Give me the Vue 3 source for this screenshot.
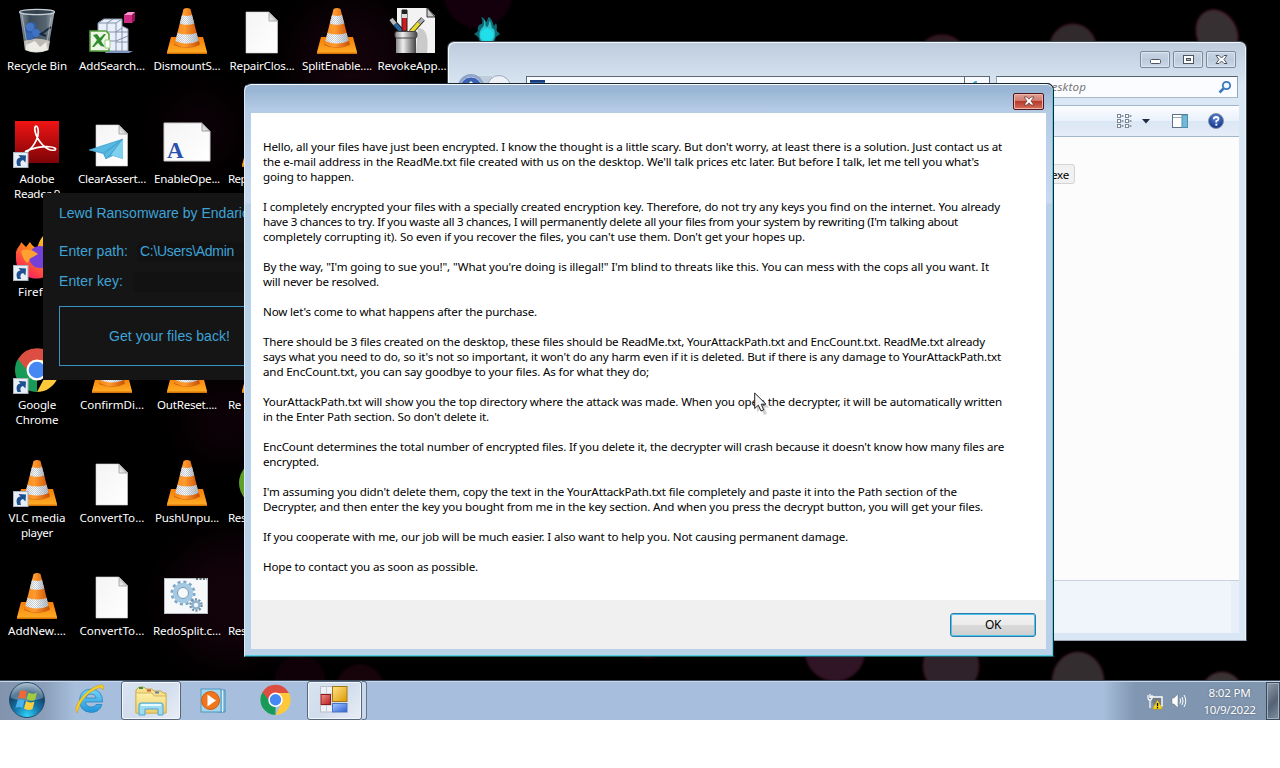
<script setup>
// Sets the letter spacing so that a single-line run takes the given width.
const vFit = {
  mounted(el, { value }) {
    if (!value) return
    const natural = el.getBoundingClientRect().width
    el.style.letterSpacing = (value - natural) / el.textContent.length + 'px'
  },
}

const icons = [
  { icon: 'bin', lines: [['Recycle Bin', 60]] },
  { icon: 'adobe', link: true, lines: [['Adobe', 35], ['Reader 9', 46]] },
  { icon: 'firefox', link: true, lines: [['Firefox', 38]] },
  { icon: 'chrome', link: true, lines: [['Google', 38], ['Chrome', 43]] },
  { icon: 'cone', link: true, lines: [['VLC media', 57], ['player', 32]] },
  { icon: 'cone', lines: [['AddNew....', 58]] },
  { icon: 'cubes', lines: [['AddSearch...', 66]] },
  { icon: 'plane', lines: [['ClearAssert...', 68]] },
  { icon: '', lines: [] },
  { icon: 'cone', lines: [['ConfirmDi...', 64]] },
  { icon: 'doc', lines: [['ConvertTo...', 65]] },
  { icon: 'doc', lines: [['ConvertTo...', 65]] },
  { icon: 'cone', lines: [['DismountS...', 67]] },
  { icon: 'font', lines: [['EnableOpe...', 66]] },
  { icon: '', lines: [] },
  { icon: 'cone', lines: [['OutReset....', 60]] },
  { icon: 'cone', lines: [['PushUnpu...', 64]] },
  { icon: 'gears', lines: [['RedoSplit.c...', 68]] },
  { icon: 'doc', lines: [['RepairClos...', 65]] },
  { icon: 'cone', side: true, lines: [['Rep', 19]] },
  { icon: '', lines: [] },
  { icon: 'cone', side: true, lines: [['Re', 13]] },
  { icon: 'disc', side: true, lines: [['Res', 18]] },
  { icon: 'doc', side: true, lines: [['Res', 18]] },
]
const topRow = [
  { icon: 'cone', lines: [['SplitEnable....', 70]] },
  { icon: 'cup', lines: [['RevokeApp...', 69]] },
  { icon: 'fire', lines: [] },
]

const paragraphs = [
  [
    ["Hello, all your files have just been encrypted. I know the thought is a little scary. But don't worry, at least there is a solution. Just contact us at", 739],
    ["the e-mail address in the ReadMe.txt file created with us on the desktop. We'll talk prices etc later. But before I talk, let me tell you what's", 716],
    ['going to happen.', 91],
  ],
  [
    ['I completely encrypted your files with a specially created encryption key. Therefore, do not try any keys you find on the internet. You already', 737],
    ["have 3 chances to try. If you waste all 3 chances, I will permanently delete all your files from your system by rewriting (I'm talking about", 695],
    ["completely corrupting it). So even if you recover the files, you can't use them. Don't get your hopes up.", 542],
  ],
  [
    ['By the way, "I\'m going to sue you!", "What you\'re doing is illegal!" I\'m blind to threats like this. You can mess with the cops all you want. It', 726],
    ['will never be resolved.', 116],
  ],
  [["Now let's come to what happens after the purchase.", 274]],
  [
    ['There should be 3 files created on the desktop, these files should be ReadMe.txt, YourAttackPath.txt and EncCount.txt. ReadMe.txt already', 722],
    ["says what you need to do, so it's not so important, it won't do any harm even if it is deleted. But if there is any damage to YourAttackPath.txt", 738],
    ['and EncCount.txt, you can say goodbye to your files. As for what they do;', 386],
  ],
  [
    ['YourAttackPath.txt will show you the top directory where the attack was made. When you open the decrypter, it will be automatically written', 739],
    ["in the Enter Path section. So don't delete it.", 226],
  ],
  [
    ["EncCount determines the total number of encrypted files. If you delete it, the decrypter will crash because it doesn't know how many files are", 741],
    ['encrypted.', 56],
  ],
  [
    ["I'm assuming you didn't delete them, copy the text in the YourAttackPath.txt file completely and paste it into the Path section of the", 694],
    ['Decrypter, and then enter the key you bought from me in the key section. And when you press the decrypt button, you will get your files.', 720],
  ],
  [['If you cooperate with me, our job will be much easier. I also want to help you. Not causing permanent damage.', 585]],
  [['Hope to contact you as soon as possible.', 215]],
]
</script>

<template>
  <div class="screen">
    <svg class="sprite" width="0" height="0">
      <defs>
        <linearGradient id="gCone" x1="0" x2="1" y1="0" y2="0">
          <stop offset="0" stop-color="#f58a1c" /><stop offset=".4" stop-color="#ff9a2e" /><stop offset="1" stop-color="#c94e04" />
        </linearGradient>
        <linearGradient id="gBase" x1="0" x2="0" y1="0" y2="1">
          <stop offset="0" stop-color="#f57c08" /><stop offset="1" stop-color="#ffb027" />
        </linearGradient>
        <linearGradient id="gBand" x1="0" x2="1" y1="0" y2="0">
          <stop offset="0" stop-color="#dfe4e8" /><stop offset=".4" stop-color="#fff" /><stop offset="1" stop-color="#b4bdc6" />
        </linearGradient>
        <linearGradient id="gDoc" x1="0" x2="1" y1="0" y2="1">
          <stop offset="0" stop-color="#f4f4f4" /><stop offset="1" stop-color="#fff" />
        </linearGradient>
        <linearGradient id="gFold" x1="0" x2="1" y1="1" y2="0">
          <stop offset="0" stop-color="#f8f8f8" /><stop offset="1" stop-color="#999" />
        </linearGradient>
        <linearGradient id="gRed" x1="0" x2="0" y1="0" y2="1">
          <stop offset="0" stop-color="#f01414" /><stop offset="1" stop-color="#7d0307" />
        </linearGradient>
        <linearGradient id="gGlass" x1="0" x2="1" y1="0" y2="0">
          <stop offset="0" stop-color="#8b98a2" /><stop offset=".3" stop-color="#3b4a57" /><stop offset=".75" stop-color="#56646f" /><stop offset="1" stop-color="#a6b0b8" />
        </linearGradient>
        <linearGradient id="gPlane" x1="0" x2="1" y1="0" y2="1">
          <stop offset="0" stop-color="#a6e2f7" /><stop offset="1" stop-color="#3399cf" />
        </linearGradient>
        <linearGradient id="gCup" x1="0" x2="1" y1="0" y2="0">
          <stop offset="0" stop-color="#888" /><stop offset=".35" stop-color="#eee" /><stop offset="1" stop-color="#444" />
        </linearGradient>
        <linearGradient id="gFox" x1=".8" x2=".1" y1="0" y2="1">
          <stop offset="0" stop-color="#ffe22e" /><stop offset=".4" stop-color="#ff8a1c" /><stop offset=".8" stop-color="#fb3250" /><stop offset="1" stop-color="#e51f87" />
        </linearGradient>
        <radialGradient id="gOrb" cx=".5" cy=".95" r=".9">
          <stop offset="0" stop-color="#31d4f6" /><stop offset=".4" stop-color="#1579ae" /><stop offset=".75" stop-color="#15436b" /><stop offset="1" stop-color="#8ea5b8" />
        </radialGradient>
        <linearGradient id="gIE" x1="0" x2="0" y1="0" y2="1">
          <stop offset="0" stop-color="#74d5fb" /><stop offset="1" stop-color="#2094d8" />
        </linearGradient>
        <linearGradient id="gFolder" x1="0" x2="0" y1="0" y2="1">
          <stop offset="0" stop-color="#fdf0a9" /><stop offset="1" stop-color="#edce6b" />
        </linearGradient>
        <linearGradient id="gGold" x1="0" x2="1" y1="0" y2="1">
          <stop offset="0" stop-color="#ffe28a" /><stop offset="1" stop-color="#dc9a00" />
        </linearGradient>
        <linearGradient id="gBlue" x1="0" x2="1" y1="0" y2="1">
          <stop offset="0" stop-color="#a9c5ff" /><stop offset="1" stop-color="#2c63d6" />
        </linearGradient>
        <linearGradient id="gCrim" x1="0" x2="1" y1="0" y2="1">
          <stop offset="0" stop-color="#f28b85" /><stop offset="1" stop-color="#b5211f" />
        </linearGradient>
        <radialGradient id="gHelp" cx=".5" cy=".3" r=".7">
          <stop offset="0" stop-color="#5b86d8" /><stop offset="1" stop-color="#112f84" />
        </radialGradient>
        <pattern id="pDots" width="2" height="2" patternUnits="userSpaceOnUse">
          <rect width="1" height="1" fill="#8a96a4" opacity=".45" /><rect x="1" y="1" width="1" height="1" fill="#8a96a4" opacity=".45" />
        </pattern>
      </defs>

      <symbol id="i-cone" viewBox="0 0 48 48">
        <path d="M8 29H40L44 44V46H4V44Z" fill="url(#gBase)" />
        <path d="M4 44.5H44V46H4Z" fill="#d87405" />
        <path d="M11 37Q24 43 37 37L36 33H12Z" fill="#c85b08" opacity=".8" />
        <path d="M20.5 1Q24 -1 27.500 1L36.500 36Q24 43 11.500 36Z" fill="url(#gCone)" />
        <path d="M19 7Q24 9 29 7L31.300 15.500Q24 18 16.800 15.500Z" fill="url(#gBand)" />
        <path d="M14.500 25Q24 28 33.700 25L35.500 33Q24 38 12.400 33Z" fill="url(#gBand)" />
        <path d="M19 7Q24 9 29 7L31.300 15.500Q24 18 16.800 15.500ZM14.500 25Q24 28 33.700 25L35.500 33Q24 38 12.400 33Z" fill="url(#pDots)" />
      </symbol>
      <symbol id="i-doc" viewBox="0 0 48 48">
        <path d="M8 4H31L39.500 12.500V45H8Z" fill="url(#gDoc)" stroke="#d4d4d4" stroke-width=".6" />
        <path d="M31 4V13H39.500Z" fill="url(#gFold)" stroke="#999" stroke-width=".8" />
      </symbol>
      <symbol id="i-bin" viewBox="0 0 48 48">
        <path d="M6.500 4L12 42Q23 47 35 42L41.500 4Z" fill="url(#gGlass)" />
        <path d="M11 33Q23 28 37 33L35.500 42Q23 47 12 42Z" fill="#bdbab4" />
        <path d="M13 37L22 33L27 39L33 34L35 42Q23 46 13 42Z" fill="#eeece6" />
        <path d="M16 15C20 12 25 17 22 21C28 20 27 29 22 29C18 35 11 30 15 26C10 23 12 18 16 15Z" fill="#2f5fae" />
        <circle cx="17" cy="19" r="4" fill="#4478c6" /><circle cx="23" cy="25" r="4" fill="#3e72c2" /><circle cx="16" cy="28" r="3.500" fill="#3767b4" />
        <path d="M38 19L31 24L28 26L33 28" fill="none" stroke="#16263e" stroke-width="2" />
        <path d="M9 7L15 42M38 9L33 41" stroke="#d5dce1" opacity=".5" />
        <ellipse cx="24" cy="4" rx="17.500" ry="2.600" fill="#34424d" stroke="#c6d0d6" stroke-width="1.300" />
      </symbol>
      <symbol id="i-adobe" viewBox="0 0 48 48">
        <rect x="2" width="44" height="42" fill="url(#gRed)" />
        <path d="M13 30C18 30 27 17 25 8C24 3 21 5 22 10C24 20 34 31 42 29C46 26 31 23 13 30C11 32 14 32 17 28" fill="none" stroke="#fff" stroke-width="1.700" />
      </symbol>
      <symbol id="i-link" viewBox="0 0 48 48">
        <rect x=".5" y="31.500" width="14.500" height="15" fill="#e9eef5" stroke="#a9b3bf" />
        <path d="M4.500 45C2.500 40 4 37 7.500 36.500L5.500 34L13 34.500L12.500 41.500L10 39C6.500 40 7.500 43 8 45Z" fill="#1d4f91" />
      </symbol>
      <symbol id="i-firefox" viewBox="0 0 48 48">
        <path d="M3 18C5 12 8 11 8 8L13 13L17 8C19 12 22 13 24 15C26 7 29 3 31 1C35 9 45 12 45 25C44 50 4 52 3 25Z" fill="url(#gFox)" />
        <circle cx="27" cy="23" r="11" fill="#7440d8" />
        <path d="M8 17Q16 13 25 20L20 23Q16 24 15 29Q10 27 8 17Z" fill="#ffa030" />
      </symbol>
      <symbol id="i-chrome" viewBox="0 0 48 48">
        <path d="M24 23L24 45A22 22 0 0 1 4.950 12Z" fill="#189b57" />
        <path d="M24 13H43.600A22 22 0 0 1 24 45L33 28Z" fill="#fdc93b" />
        <path d="M5 12A22 22 0 0 1 43.500 13H24Q16 14 14 23Z" fill="#dc4e41" />
        <circle cx="24" cy="23" r="10.500" fill="#fff" /><circle cx="24" cy="23" r="8.300" fill="#4587f3" />
      </symbol>
      <symbol id="i-cubes" viewBox="0 0 48 48">
        <path d="M10 15L16 11H34V18L40 21V43H10Z" fill="#eaf0f9" stroke="#8794ac" />
        <path d="M10 15H28V43M19 15V43M10 24H28M10 33H28M16 11L10 15M25 11L19 15M34 11L28 15M28 24L34 20M28 33L40 28M34 18V43M28 24H40M28 34H40" fill="none" stroke="#8291aa" />
        <path d="M18 43H45L41 45H17Z" fill="#7c93bd" />
        <path d="M36 7L40 4H47V12L44 15H36Z" fill="#ce2d83" /><path d="M36 7L40 4H47L44 7Z" fill="#f39aca" /><path d="M44 7L47 4V12L44 15Z" fill="#8f1458" />
        <path d="M2 23H18L21 26V43H2Z" fill="#edf5e5" stroke="#57a13c" stroke-width="1.500" />
        <path d="M5 27L9 26L12 30L16 26H18L13 33L17 39L13 38L10 35L6 39H4L9 32Z" fill="#2e8b2e" />
        <path d="M17 32h5v8h-5z" fill="#fff" stroke="#9ccc82" />
      </symbol>
      <symbol id="i-plane" viewBox="0 0 48 48">
        <use href="#i-doc" width="48" height="48" />
        <path d="M1 29L35 18V38L25 35L18 38L15 33Z" fill="url(#gPlane)" />
        <path d="M1 29L35 18L15 32ZM35 18L22 34L18 38L16 33Z" fill="#58b9e2" stroke="#2e90bf" stroke-width=".5" />
        <path d="M35 18L23 34L35 38Z" fill="#7fd0ef" />
      </symbol>
      <symbol id="i-font" viewBox="0 0 48 48">
        <path d="M1 2H39L47 10V40H1Z" fill="url(#gDoc)" stroke="#ccc" />
        <path d="M39 2V10H47Z" fill="url(#gFold)" stroke="#777" stroke-width=".7" />
      </symbol>
      <symbol id="i-gears" viewBox="0 0 48 48">
        <rect x="1.500" y="5.500" width="43" height="35" fill="#f7f8fa" stroke="#b9bec6" />
        <path d="M33 6h11" stroke="#3c444f" stroke-width="1.500" stroke-dasharray="2 1.500" />
        <circle cx="20" cy="20" r="11" fill="none" stroke="#7ba6c6" stroke-width="3" stroke-dasharray="3 2.760" />
        <circle cx="20" cy="20" r="8" fill="none" stroke="#a4c9e2" stroke-width="4.500" />
        <circle cx="20" cy="20" r="5.500" fill="#f7f8fa" stroke="#7397b3" />
        <circle cx="33" cy="32" r="5.500" fill="none" stroke="#6f8fa8" stroke-width="2.500" stroke-dasharray="2 1.460" />
        <circle cx="33" cy="32" r="3.500" fill="#eef5fa" stroke="#8eb2ca" stroke-width="2.500" />
      </symbol>
      <symbol id="i-disc" viewBox="0 0 48 48">
        <circle cx="24" cy="23" r="23" fill="#5f9f2c" /><circle cx="24" cy="23" r="15" fill="#9bd05c" />
      </symbol>
      <symbol id="i-cup" viewBox="0 0 48 48">
        <path d="M9 -.5H39L47 8V45H9Z" fill="#f3f3f3" /><path d="M39 -.5V9H47Z" fill="#ccc" stroke="#333" />
        <path d="M30 20Q42 20 39 45H28Z" fill="#999" opacity=".45" />
        <path d="M14 24L4 13" stroke="#111" stroke-width="6" /><path d="M14 24L7 16" stroke="#2464a0" stroke-width="4" /><path d="M7 16L3 11" stroke="#b9b9b9" stroke-width="4" />
        <path d="M14 2h5v21h-5z" fill="#d4191c" stroke="#222" /><path d="M14 2h5v4h-5z" fill="#222" /><path d="M14 6h5v4h-5z" fill="#ddd" />
        <path d="M23 24L35 11" stroke="#222" stroke-width="5" /><path d="M23 24L31 15" stroke="#e6dc2f" stroke-width="3.500" /><path d="M31 15L35 11" stroke="#aaa" stroke-width="3.500" />
        <path d="M8 29H28V45H8Z" fill="url(#gCup)" /><rect x="7" y="23.500" width="22" height="6.500" rx="2" fill="url(#gCup)" stroke="#444" />
      </symbol>
      <symbol id="i-fire" viewBox="0 0 48 48">
        <path d="M18 9C22 10 22 12 23 14C25 13 24 10 26 9C30 12 30 16 31 18L33 15C35 19 33 21 34 23L37 26L33 29L31 34H17L15 29L11 26L15 23C14 19 16 16 19 16C20 13 19 11 18 9Z" fill="#0f6a74" />
        <path d="M21 12C24 15 21 18 24 19C27 17 25 14 27 13C29 17 28 21 31 21C32 24 33 29 29 34H19C15 29 16 22 20 19C22 16 21 14 21 12Z" fill="#2cc3ce" />
        <circle cx="24" cy="27" r="6.500" fill="#1fe0ea" />
      </symbol>
    </svg>

    <svg class="wallpaper" width="1280" height="681" viewBox="0 0 1280 681">
      <defs><filter id="soft" color-interpolation-filters="sRGB"><feGaussianBlur stdDeviation="1" /></filter>
        <filter id="haze" x="-20%" y="-20%" width="140%" height="140%" color-interpolation-filters="sRGB"><feGaussianBlur stdDeviation="18" /></filter></defs>
      <rect width="1280" height="681" fill="#000" />
      <g fill="#12020a" filter="url(#haze)"><circle cx="230" cy="600" r="60" /><circle cx="350" cy="60" r="55" /><circle cx="200" cy="130" r="40" opacity=".6" /><circle cx="225" cy="420" r="40" opacity=".7" /></g>
      <g filter="url(#soft)">
        <circle cx="478" cy="-6" r="34" fill="#14000c" /><circle cx="300" cy="680" r="25" fill="#100108" /><circle cx="360" cy="688" r="24" fill="#17030a" />
        <circle cx="648" cy="640" r="19" fill="#1d020b" />
        <circle cx="835" cy="651" r="30" fill="#2f1526" stroke="#36091b" />
        <circle cx="951" cy="666" r="28" fill="#30222a" stroke="#3d0d1b" />
        <ellipse cx="1078" cy="682" rx="26" ry="30" fill="#332d2f" stroke="#421320" />
        <ellipse cx="1222" cy="694" rx="21" ry="22" fill="#3a3334" stroke="#421320" />
        <circle cx="942" cy="61" r="26" fill="#2b1a21" stroke="#4d1023" />
        <circle cx="1073" cy="47" r="23" fill="#312a2c" stroke="#49121f" />
        <ellipse cx="1217" cy="34" rx="20" ry="25" transform="rotate(-25 1217 34)" fill="#373032" stroke="#521024" />
      </g>
    </svg>

    <div class="desktop">
      <div class="icon-grid">
        <div v-for="(it, i) in icons" :key="i" class="cell">
          <svg class="pic" viewBox="0 0 48 48"><use v-if="it.icon" :href="'#i-' + it.icon" width="48" height="48" /><use v-if="it.link" href="#i-link" width="48" height="48" /><text v-if="it.icon === 'font'" x="4" y="37" class="letter">A</text></svg>
          <div v-for="l in it.lines" :key="l[0]" class="label" :class="{ side: it.side }"><span v-fit="l[1]">{{ l[0] }}</span></div>
        </div>
      </div>
      <div v-for="it in topRow" :key="it.icon" class="cell">
        <svg class="pic" viewBox="0 0 48 48"><use :href="'#i-' + it.icon" width="48" height="48" /></svg>
        <div v-for="l in it.lines" :key="l[0]" class="label"><span v-fit="l[1]">{{ l[0] }}</span></div>
      </div>
    </div>

    <section class="explorer">
      <div class="caption">
        <i><svg width="30" height="17"><rect x="10.500" y="8.500" width="10" height="4" rx="1" fill="#fff" stroke="#4d545e" /></svg></i>
        <i><svg width="30" height="17"><rect x="10.500" y="4.500" width="10" height="8" fill="#fff" stroke="#4d545e" /><rect x="13.500" y="7.500" width="4" height="2" fill="#aebccc" stroke="#4d545e" /></svg></i>
        <i><svg width="30" height="17"><path d="M10 4.500H13L15.500 7L18 4.500H21L18 8.500L21 12.500H18L15.500 10L13 12.500H10L13 8.500Z" fill="#fff" stroke="#4d545e" /></svg></i>
      </div>
      <div class="navrow">
        <svg class="nav" width="70" height="28"><path d="M22 2H43V20H22Z" fill="#bfccdc" /><circle cx="22" cy="13" r="13" fill="#8fa4c6" /><circle cx="22" cy="14" r="11" fill="#3c62b5" stroke="#b5c6e4" /><path d="M17 12L22 7L27 12Z" fill="#fff" /><circle cx="50" cy="13" r="11.500" fill="#eef2f7" stroke="#9aa9bd" /></svg>
        <div class="address"><svg width="16" height="16"><rect width="15" height="12" fill="#2a64b4" /><path d="M0 1H15" stroke="#1a3d78" stroke-width="2" /></svg><span>Desktop</span><svg class="refresh" width="25" height="20"><path d="M.5 0V20" stroke="#666" /><path d="M8 8L11 5H13" fill="none" stroke="#269bcd" stroke-width="1.500" /></svg></div>
        <div class="search"><em v-fit="81">Search Desktop</em><svg width="14" height="14"><circle cx="8.500" cy="5.500" r="3.700" fill="#eff7ff" stroke="#3877bd" stroke-width="1.800" /><path d="M5.500 8.500L1.500 12.500" stroke="#3877bd" stroke-width="2.500" /></svg></div>
      </div>
      <div class="client">
        <div class="tools">
          <svg width="16" height="14"><g fill="#fff" stroke="#7b8696" stroke-width="1"><rect x="1.500" y=".5" width="3" height="3" /><rect x="1.500" y="5.500" width="3" height="3" /><rect x="1.500" y="10.500" width="3" height="3" /><rect x="9.500" y=".5" width="3" height="3" /><rect x="9.500" y="5.500" width="3" height="3" /><rect x="9.500" y="10.500" width="3" height="3" /></g><path d="M5.500 2H8M5.500 7H8M5.500 12H8M13.500 2H16M13.500 7H16M13.500 12H16" stroke="#8d98a8" stroke-width="2" stroke-dasharray="1.500 .6" /></svg>
          <svg class="drop" width="8" height="5"><path d="M0 0H8L4 4.500Z" fill="#1c2c45" /></svg>
          <svg class="pane" width="17" height="15"><rect x=".5" y=".5" width="15" height="13" fill="#fff" stroke="#5d7085" /><path d="M1 3.500H10" stroke="#9aabbc" /><rect x="10" y="1" width="5.500" height="12.500" fill="#72b9d8" stroke="#4f91b1" /></svg>
          <svg class="help" width="16" height="16"><circle cx="8" cy="8" r="7.500" fill="url(#gHelp)" stroke="#8794ac" /><path d="M5.700 6.200Q5.800 4 8.200 4Q10.600 4.100 10.500 6Q10.300 7.500 8.300 8.100V9.400" fill="none" stroke="#fff" stroke-width="1.800" /><rect x="7.400" y="10.700" width="1.900" height="1.900" fill="#fff" /></svg>
        </div>
        <div class="files"><div class="file"><span v-fit="18">exe</span></div></div>
        <div class="details"></div>
      </div>
    </section>

    <section class="locker">
      <p class="title"><span v-fit="190">Lewd Ransomware by Endaric</span></p>
      <p class="path"><span v-fit="69">Enter path:</span><b><span v-fit="94">C:\Users\Admin</span></b></p>
      <p class="key"><span v-fit="64">Enter key:</span><b></b></p>
      <div class="back"><span v-fit="121">Get your files back!</span></div>
    </section>

    <section class="dialog">
      <div class="bar"><div class="close"><svg width="30" height="16"><path d="M10 4H13L15 6.200L17 4H20L17 8L20 12H17L15 9.800L13 12H10L13 8Z" fill="#fff" stroke="#6b3a38" stroke-width=".8" /></svg></div></div>
      <div class="content">
        <div class="message">
          <div v-for="(p, i) in paragraphs" :key="i" class="para">
            <div v-for="l in p" :key="l[0]" class="line"><span v-fit="l[1]">{{ l[0] }}</span></div>
          </div>
        </div>
        <div class="foot"><div class="ok"><span v-fit="16">OK</span></div></div>
      </div>
    </section>

    <svg class="cursor" width="16" height="24" viewBox="0 0 16 24"><path d="M3 3V20L7 16.500L10 23L13 21.500L10.500 15.500H15Z" fill="#777" opacity=".35" /><path d="M.7 1V16.500L4.300 13.200L7 19L9.700 17.800L7.300 12.200H12Z" fill="#f5f5f5" stroke="#222" stroke-width="1" /></svg>

    <footer class="taskbar">
      <div class="start">
        <svg width="38" height="38" viewBox="0 0 38 38"><circle cx="19" cy="19" r="17.500" fill="url(#gOrb)" stroke="#294d6e" /><path d="M3 17A16 15 0 0 1 35 17Q19 23 3 17Z" fill="#c1d3df" opacity=".38" />
          <path d="M12 10Q15 8 19 11L17 18Q13 16 10 18Z" fill="#ef6933" /><path d="M20.500 11.500Q25 14 29 11.500L27 19Q23 21 18.500 18Z" fill="#9fcb3d" /><path d="M9.500 19.500Q13 17.500 16.600 19.500L14.500 27Q11 25 7.500 27Z" fill="#49b2ed" /><path d="M18 20Q22 22.500 26.500 20.500L24.500 28Q20 30 16 27.500Z" fill="#fdcf3e" /></svg>
      </div>
      <div class="task ie">
        <svg width="34" height="34" viewBox="0 0 34 34"><path d="M29.500 19H12.500Q13 24 18.500 24Q21.500 24 23 21.500H29Q26.500 29.500 18 29.500Q6.500 28.500 6.500 17.500Q7 6.500 18 6Q30 7 29.500 19ZM12.800 15H23.300Q22.500 11 18 11Q13.500 11 12.800 15Z" fill="url(#gIE)" stroke="#237eb7" stroke-width=".7" /><path d="M4 30Q0 25 9 14Q18 4 27 2Q32 1 30 7Q29 3 23 6Q8 13 4 30Z" fill="#f7cf25" stroke="#c79a13" stroke-width=".5" /></svg>
      </div>
      <div class="task active folder">
        <svg width="34" height="32" viewBox="0 0 34 32"><path d="M2 5L5 2H10L12 4H18L20 6H27L29 8H32V28H2Z" fill="#f5e08b" stroke="#c9a849" /><path d="M5 3h4" stroke="#3a8a54" stroke-width="2" /><path d="M13 5.500h4" stroke="#c25c3a" stroke-width="2" /><path d="M21 7.500h4" stroke="#5b7fae" stroke-width="2" /><path d="M2 8H18L20 11H32V28H2Z" fill="url(#gFolder)" stroke="#d5b75c" /><path d="M5 30V20Q5 18 7 18H27Q29 18 29 20V30H24V24H11V30Z" fill="#9bdcf3" stroke="#4ea5cf" /><path d="M7 20H27" stroke="#e5faff" stroke-width="2" /></svg>
      </div>
      <div class="task wmp">
        <svg width="28" height="26" viewBox="0 0 28 26"><path d="M17 2H25V24H17Z" fill="#8cc6e4" stroke="#428db7" /><path d="M22.500 2V24" stroke="#d7f1fb" /><rect x="1" y="1" width="20" height="23" fill="#a4d5ed" stroke="#5097be" /><circle cx="10.500" cy="12.500" r="9" fill="#f0751c" stroke="#d05d0d" /><path d="M7.500 6.500L16 12.500L7.500 18.500Z" fill="#fff" /></svg>
      </div>
      <div class="task chr"><svg width="33" height="33" viewBox="0 0 48 48"><use href="#i-chrome" width="48" height="48" /></svg></div>
      <div class="task active app">
        <svg width="28" height="27" viewBox="0 0 28 27"><path d="M.5 .5H13V8H.5ZM.5 19H13V26H.5Z" fill="#eef1f5" stroke="#b9bfc8" /><path d="M6.500 0V8M6.500 19V26" stroke="#c7ccd3" /><rect x="12.500" y=".5" width="14.500" height="15" fill="url(#gGold)" stroke="#a27812" /><rect x="1" y="8.500" width="9.500" height="10" fill="url(#gCrim)" stroke="#8e1b1b" /><rect x="12.500" y="17.500" width="14.500" height="8.500" fill="url(#gBlue)" stroke="#4b74bd" /></svg>
      </div>
      <div class="stack"></div>
      <div class="tray">
        <svg class="net" width="18" height="17" viewBox="0 0 18 17"><path d="M3 3H15V12H7" fill="#717c88" stroke="#fff" stroke-width="1.400" /><path d="M1 1V4Q1 6 3 6Q5 6 5 4V1M3 0V4M3 6V14" fill="none" stroke="#fff" stroke-width="1.200" /><path d="M10.500 6L15.500 15H5.500Z" fill="#f9d71c" stroke="#b99500" stroke-width=".6" /><path d="M10.500 9V12.300M10.500 13V14.300" stroke="#000" stroke-width="1.300" /></svg>
        <svg class="vol" width="16" height="16" viewBox="0 0 16 16"><path d="M1 5H3L7 1V15L3 11H1Z" fill="#fff" stroke="#64707e" stroke-width=".5" /><path d="M9 5.500Q10.500 8 9 10.500M11 4Q13.300 8 11 12M13 2Q16.500 8 13 14" fill="none" stroke="#fff" /></svg>
        <div class="clock"><span v-fit="42">8:02 PM</span><span v-fit="52">10/9/2022</span></div>
        <div class="peek"></div>
      </div>
    </footer>
  </div>
</template>

<style>
body { background: #fff; }
</style>

<style scoped>
.screen { position: relative; width: 1280px; height: 768px; overflow: hidden; font: 11.6px/15px "Noto Sans", "Open Sans", sans-serif; color: #000; }
.screen span, .screen em { display: inline-block; white-space: nowrap; }
.sprite, .wallpaper { position: absolute; left: 0; top: 0; }
.letter { font: bold 23px "Liberation Serif", serif; fill: #2a4fae; text-shadow: none; }
.desktop { position: absolute; left: 0; top: 0; display: flex; }
.icon-grid { display: grid; grid-auto-flow: column; grid-template-rows: repeat(6, 113px); grid-auto-columns: 75px; }
.cell { width: 75px; height: 113px; padding-top: 8px; box-sizing: border-box; color: #fff; text-shadow: 0 1px 2px #000; }
.pic { display: block; width: 48px; height: 48px; margin: 0 0 2px 13px; overflow: visible; }
.label { display: flex; justify-content: center; height: 15px; white-space: nowrap; margin: 0 -4px 0 -5px; }
.label.side { justify-content: flex-start; margin-left: 3px; }

.explorer { position: absolute; left: 447px; top: 41px; width: 800px; height: 600px; box-sizing: border-box; border: 1px solid #3f4750; border-bottom-color: #9ba6b4; border-radius: 7px 7px 0 0; padding: 0 7px; background: linear-gradient(#bdcbdc 0, #cddbea 25px, #dae7f4 45px, #d9e6f4 100%); box-shadow: inset 1px 1px 0 #f3f8fc, inset -1px 0 0 #eef4fa; }
.caption { display: flex; justify-content: flex-end; gap: 3px; padding: 9px 3px 0 0; height: 25px; }
.caption i { box-sizing: border-box; width: 30px; height: 17px; border: 1px solid #7d8997; border-radius: 2px; background: linear-gradient(#c9d5e3, #bccbdc 50%, #cad8e6); box-shadow: inset 0 0 0 1px #dce6f0; }
.caption i svg { display: block; margin: -1px; }
.navrow { display: flex; height: 29px; }
.nav { margin: -2px 7px 0 -6px; }
.address { box-sizing: border-box; width: 464px; height: 22px; border: 1px solid #5f6873; background: #f7fbff; display: flex; gap: 6px; padding: 3px 0 0 3px; }
.refresh { margin: -3px 0 0 auto; }
.search { box-sizing: border-box; width: 242px; height: 22px; margin-left: 6px; border: 1px solid #6d7d90; border-color: #56616e #93a4b8 #a9b9ca; background: #fafcff; display: flex; justify-content: space-between; padding: 3px 5px 0 8px; color: #777; }
.search em { height: 15px; margin-top: -1px; }
.client { width: 784px; height: 528px; }
.tools { height: 32px; box-sizing: border-box; border-top: 1px solid #a3b5cb; border-bottom: 1px solid #a2b6ce; background: linear-gradient(#fbfdff, #eaf1fb 50%, #dce7f5 51%, #e4edf8); display: flex; align-items: center; padding-left: 661px; }
.drop { margin-left: 10px; }
.pane { margin-left: 22px; }
.help { margin-left: 19px; }
.files { height: 444px; background: #fcfcfc; box-sizing: border-box; padding: 27px 0 0 590px; border-bottom: 1px solid #c9d3df; }
.file { box-sizing: border-box; width: 30px; height: 20px; border: 1px solid #d4d4d4; border-radius: 3px; background: #f1f1f1; padding: 2px 0 0 5px; }
.details { height: 52px; background: linear-gradient(90deg, #f0f5fc 99%, #e9eff9 99%); }

.locker { position: absolute; left: 43px; top: 193px; width: 400px; height: 187px; box-sizing: border-box; padding: 11px 16px; background: #151515; color: #3ea3d8; font: 14px/18px "Liberation Sans", sans-serif; }
.locker p { margin: 0; display: flex; }
.locker b { font-weight: normal; background: #121212; height: 20px; width: 250px; }
.path { padding-top: 20px; }
.path b { margin-left: 9px; padding-left: 3px; }
.key { padding-top: 10px; }
.key b { margin-left: 11px; }
.back { box-sizing: border-box; margin-top: 14px; height: 60px; border: 1px solid #3a94c3; padding: 20px 0 0 49px; }

.dialog { position: absolute; left: 244px; top: 83px; width: 810px; height: 574px; box-sizing: border-box; border: 1px solid #182631; border-left-color: #dce9f6; border-bottom-color: #23626f; border-radius: 7px 7px 0 0; padding: 0 6px; background: linear-gradient(#9ab4d2 0, #99b5d5 6px, #b5cbe5 26px, #c7daf0 119px, #b9d0e9 120px, #b9d0e9 100%); box-shadow: inset 0 1px 0 #f7fbff, inset -1px -1px 0 #55cde0; }
.bar { height: 29px; display: flex; justify-content: flex-end; padding: 9px 3px 0 0; box-sizing: border-box; }
.close { box-sizing: border-box; width: 31px; height: 17px; border: 1px solid #491719; border-radius: 2px; background: linear-gradient(#e1a398, #cf776a 48%, #b8392a 50%, #d3705b); box-shadow: inset 0 0 0 1px #efb5ac; }
.close svg { display: block; margin: -1px 0 0; }
.content { width: 795px; height: 536px; background: #fff; }
.message { box-sizing: border-box; height: 487px; padding: 26px 0 0 12px; display: flex; flex-direction: column; gap: 15px; }
.line { height: 15px; display: flex; }
.foot { height: 49px; background: #f0f0f0; display: flex; justify-content: flex-end; padding: 13px 10px 0 0; box-sizing: border-box; }
.ok { box-sizing: border-box; width: 86px; height: 24px; border: 1px solid #327ba5; border-radius: 3px; background: linear-gradient(#f2f2f2, #ebebeb 48%, #dadada 50%, #cfcfcf); box-shadow: inset 0 0 0 1px #48c4ee; text-align: center; padding-top: 3px; font-size: 12px; }
.cursor { position: absolute; left: 754px; top: 392px; }

.taskbar { position: absolute; left: 0; top: 680px; width: 1280px; height: 40px; box-sizing: border-box; border-top: 1px solid #3c4a5b; box-shadow: inset 0 1px 0 #c8d8ea; background: linear-gradient(90deg, #8193ad 0, #8b9fba 45px, #a7bfdc 75px, #a7bfdc 1103px, #8096b1 1135px, #8095ae 100%); display: flex; }
.start { width: 59px; padding-left: 8px; box-sizing: border-box; }
.task { display: flex; align-items: center; justify-content: center; height: 39px; box-sizing: border-box; }
.ie { width: 62px; padding-bottom: 2px; }
.active { border: 1px solid #56677d; border-radius: 3px; background: linear-gradient(135deg, #d9e4f1, #d1dcec 50%, #e8eef6); box-shadow: inset 0 0 0 1px #f2f7fc; }
.folder { width: 60px; }
.wmp { width: 63px; padding-left: 2px; }
.chr { width: 63px; padding-right: 1px; }
.app { width: 55px; padding: 0 1px 3px 0; }
.stack { width: 5px; border: 1px solid #63758b; border-left: 0; border-radius: 0 3px 3px 0; background: #c9d8ea; box-sizing: border-box; }
.tray { margin-left: auto; display: flex; align-items: center; color: #fff; }
.net { margin-top: 3px; }
.vol { margin-left: 6px; }
.clock { width: 79px; box-sizing: border-box; display: flex; flex-direction: column; align-items: center; line-height: 17px; font-size: 11.6px; text-shadow: 0 0 2px #4b5b70; padding-left: 6px; }
.peek { width: 14px; height: 38px; box-sizing: border-box; border: 1px solid #3b4858; box-shadow: inset 0 0 0 1px #a2afbf; background: linear-gradient(135deg, #8e9aa9, #536274 55%, #8192a5); }
</style>
